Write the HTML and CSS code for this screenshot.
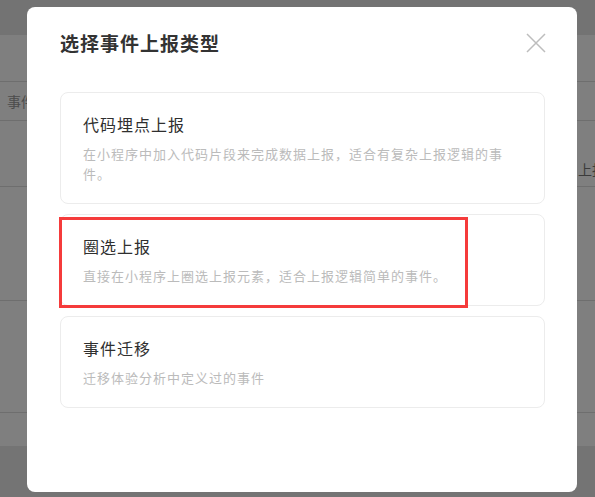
FILE: index.html
```html
<!DOCTYPE html>
<html lang="zh-CN">
<head>
    <meta charset="UTF-8">
    <meta name="viewport" content="width=device-width, initial-scale=1.0">
    <title>选择事件上报类型</title>
    <link rel="stylesheet" href="styles.css">
</head>
<body>
    <!-- Page behind the dialog -->
    <div class="page">
        <div class="topbar"></div>
        <div class="spacer"></div>
        <div class="row row-head"><span>事件名称</span></div>
        <div class="row row-1"><span class="right-text">上报</span></div>
        <div class="row row-2"></div>
        <div class="row row-3"></div>
        <div class="row row-4"></div>
        <div class="footer"></div>
    </div>

    <!-- Dialog -->
    <div class="mask">
        <div class="modal">
            <div class="modal-header">
                <h2>选择事件上报类型</h2>
                <button class="close-btn" aria-label="关闭">
                    <svg width="20" height="20" viewBox="0 0 20 20">
                        <path d="M1 1 L19 19 M19 1 L1 19" stroke="#bdbdbd" stroke-width="1.5" fill="none"/>
                    </svg>
                </button>
            </div>
            <div class="type-list">
                <div class="type-card">
                    <div class="type-title">代码埋点上报</div>
                    <div class="type-desc">在小程序中加入代码片段来完成数据上报，适合有复杂上报逻辑的事件。</div>
                </div>
                <div class="type-card">
                    <div class="type-title">圈选上报</div>
                    <div class="type-desc">直接在小程序上圈选上报元素，适合上报逻辑简单的事件。</div>
                    <div class="highlight"></div>
                </div>
                <div class="type-card">
                    <div class="type-title">事件迁移</div>
                    <div class="type-desc">迁移体验分析中定义过的事件</div>
                </div>
            </div>
        </div>
    </div>
</body>
</html>
```

FILE: styles.css
```css
body {
    margin: 0;
    padding: 0;
    overflow: hidden;
    font-family: "Noto Sans CJK SC", "Noto Sans", sans-serif;
    background-color: #fff;
}

/* background page */
.page {
    display: flex;
    flex-direction: column;
    height: 497px;
}

.topbar {
    height: 35px;
    background-color: #e6e6e6;
}

.spacer {
    height: 46px;
}

.row {
    border-top: 1px solid #dcdcdc;
    display: flex;
    align-items: center;
    font-size: 14px;
    color: #999;
}

.row-head {
    height: 38px;
    padding-left: 7px;
}

.row-1 {
    height: 35px;
    padding-top: 30px;
    justify-content: flex-end;
}

.row-1 .right-text {
    margin-right: -11px;
    color: #777;
}

.row-2 {
    height: 113px;
}

.row-3 {
    height: 111px;
}

.row-4 {
    height: 33px;
}

.footer {
    flex: 1;
    background-color: #e8e8e8;
}

/* dialog */
.mask {
    position: fixed;
    inset: 0;
    background-color: rgba(0, 0, 0, 0.5);
    display: flex;
    padding: 7px 18px 5px 27px;
}

.modal {
    flex: 1;
    background-color: #fff;
    border-radius: 8px;
    padding: 0 32px 0 33px;
}

.modal-header {
    display: flex;
    align-items: center;
    justify-content: space-between;
    height: 71px;
}

.modal-header h2 {
    margin: 0;
    font-size: 19px;
    letter-spacing: 1px;
    font-weight: bold;
    color: #333;
}

.close-btn {
    border: none;
    background: none;
    padding: 0;
    margin-right: -1px;
    width: 20px;
    height: 20px;
    cursor: pointer;
}

.close-btn svg {
    display: block;
}

.type-list {
    display: flex;
    flex-direction: column;
    gap: 10px;
    margin-top: 14px;
}

.type-card {
    position: relative;
    border: 1px solid #ececec;
    border-radius: 8px;
    padding: 19px 34px 19px 22px;
}

.type-title {
    font-size: 16px;
    line-height: 24px;
    letter-spacing: 1px;
    color: #2f2f2f;
}

.type-desc {
    margin-top: 8px;
    font-size: 13px;
    line-height: 20px;
    letter-spacing: 1px;
    color: #bbb;
}

/* red annotation box */
.highlight {
    position: absolute;
    left: -2px;
    top: 2px;
    width: 403px;
    height: 85px;
    border: 3px solid #f53b3b;
}
```
